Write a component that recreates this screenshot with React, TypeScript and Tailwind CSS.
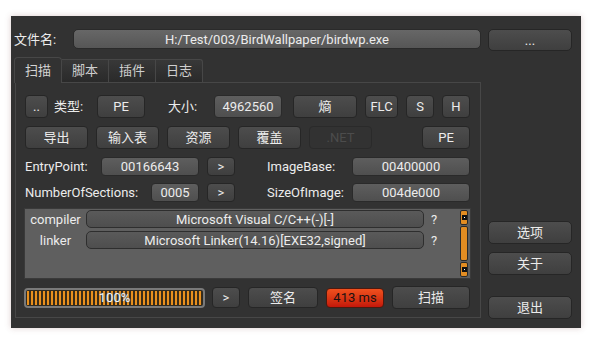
import React from "react";

const FONT = "font-['Roboto','Noto_Sans_CJK_SC',sans-serif]";

function Btn({ className = "", children, disabled = false }: { className?: string; children?: React.ReactNode; disabled?: boolean }) {
  return (
    <div
      className={
        "flex shrink-0 items-center justify-center rounded-[4px] border text-[13px] leading-none " +
        (disabled
          ? "border-[#2a2a2a] bg-[#323232] text-[#4c4c4c] "
          : "border-[#262626] bg-linear-to-b from-[#4d4d4d] to-[#3f3f3f] text-[#ececec] ") +
        className
      }
    >
      {children}
    </div>
  );
}

function Field({ className = "", children }: { className?: string; children?: React.ReactNode }) {
  return (
    <div
      className={
        "flex shrink-0 items-center justify-center rounded-[4px] border border-[#2a2a2a] bg-linear-to-b from-[#5e5e5e] to-[#4f4f4f] text-[13px] leading-none text-[#ececec] " +
        className
      }
    >
      {children}
    </div>
  );
}

function Label({ className = "", children }: { className?: string; children?: React.ReactNode }) {
  return <div className={"shrink-0 text-[13px] leading-none text-[#ececec] " + className}>{children}</div>;
}

function ScrollBtn() {
  return (
    <div className="flex h-[15px] w-[8px] items-center justify-center rounded-[2px] border border-[#2a2a2a] bg-[#e38d22]">
      <div className="flex h-[5px] w-[5px] items-center justify-center bg-[#111]">
        <div className="h-[1px] w-[1px] bg-white" />
      </div>
    </div>
  );
}

export default function App() {
  return (
    <div className={"h-[339px] w-[592px] overflow-hidden bg-white pl-[11px] pt-[16px] " + FONT}>
      <div className="relative h-[312px] w-[570px] bg-[#323232] shadow-[0_0_6px_rgba(120,60,60,0.25)]">
        {/* header row */}
        <div className="flex items-start pt-[13px]">
          <Label className="ml-[3px] mt-[4px] w-[59px]">文件名:</Label>
          <div className="flex h-[20px] w-[408px] items-center justify-center rounded-[5px] border border-[#2a2a2a] bg-linear-to-b from-[#676767] to-[#565656] text-[13px] leading-none text-[#ececec]">
            H:/Test/003/BirdWallpaper/birdwp.exe
          </div>
          <Btn className="ml-[7px] h-[22px] w-[84px] rounded-[5px]">...</Btn>
        </div>

        {/* main */}
        <div className="mt-[6px] flex">
          <div className="ml-[3px] w-[467px]">
            {/* tabs */}
            <div className="relative z-10 flex h-[25px] items-end">
              <div className="-mb-px flex h-[26px] w-[48px] items-center justify-center rounded-t-[4px] border border-b-0 border-[#474747] bg-[#323232] text-[13px] text-[#d4d4d4]">
                扫描
              </div>
              <div className="flex h-[23px] w-[47px] items-center justify-center border border-b-0 border-l-0 border-[#474747] bg-linear-to-b from-[#383838] to-[#2a2a2a] text-[13px] text-[#cfcfcf]">
                脚本
              </div>
              <div className="flex h-[23px] w-[47px] items-center justify-center border border-b-0 border-l-0 border-[#474747] bg-linear-to-b from-[#383838] to-[#2a2a2a] text-[13px] text-[#cfcfcf]">
                插件
              </div>
              <div className="flex h-[23px] w-[47px] items-center justify-center rounded-tr-[3px] border border-b-0 border-l-0 border-[#474747] bg-linear-to-b from-[#383838] to-[#2a2a2a] text-[13px] text-[#cfcfcf]">
                日志
              </div>
            </div>
            {/* panel */}
            <div className="ml-px h-[236px] w-[466px] border border-[#474747] pl-[9px] pt-[12px]">
              {/* row 1 */}
              <div className="flex h-[23px] items-center">
                <Btn className="h-[23px] w-[23px]">..</Btn>
                <Label className="ml-[6px] w-[43px]">类型:</Label>
                <Btn className="h-[23px] w-[48px]">PE</Btn>
                <Label className="ml-[23px] w-[46px]">大小:</Label>
                <Field className="h-[23px] w-[68px]">4962560</Field>
                <Btn className="ml-[11px] h-[23px] w-[64px]">熵</Btn>
                <Btn className="ml-[8px] h-[23px] w-[33px]">FLC</Btn>
                <Btn className="ml-[8px] h-[23px] w-[28px]">S</Btn>
                <Btn className="ml-[8px] h-[23px] w-[28px]">H</Btn>
              </div>
              {/* row 2 */}
              <div className="mt-[8px] flex h-[23px] items-center">
                <Btn className="h-[23px] w-[63px]">导出</Btn>
                <Btn className="ml-[8px] h-[23px] w-[63px]">输入表</Btn>
                <Btn className="ml-[8px] h-[23px] w-[63px]">资源</Btn>
                <Btn className="ml-[8px] h-[23px] w-[63px]">覆盖</Btn>
                <Btn disabled className="ml-[8px] h-[23px] w-[63px]">.NET</Btn>
                <Btn className="ml-[50px] h-[23px] w-[48px]">PE</Btn>
              </div>
              {/* row 3 */}
              <div className="mt-[8px] flex h-[19px] items-center">
                <Label className="w-[76px]">EntryPoint:</Label>
                <Field className="h-[19px] w-[98px]">00166643</Field>
                <Btn className="ml-[8px] h-[19px] w-[28px]">&gt;</Btn>
                <Label className="ml-[32px] w-[85px]">ImageBase:</Label>
                <Field className="h-[19px] w-[118px]">00400000</Field>
              </div>
              {/* row 4 */}
              <div className="mt-[7px] flex h-[19px] items-center">
                <Label className="w-[126px]">NumberOfSections:</Label>
                <Field className="h-[19px] w-[48px]">0005</Field>
                <Btn className="ml-[8px] h-[19px] w-[28px]">&gt;</Btn>
                <Label className="ml-[32px] w-[85px]">SizeOfImage:</Label>
                <Field className="h-[19px] w-[118px]">004de000</Field>
              </div>
              {/* results */}
              <div className="-ml-px mt-[6px] flex h-[71px] w-[447px] border border-[#3a3a3a] bg-[#5f5f5f] pt-px">
                <div className="flex flex-col gap-[3px]">
                  <div className="flex h-[18px] items-center">
                    <div className="w-[61px] text-center text-[13px] leading-none text-[#ececec]">compiler</div>
                    <div className="flex h-[18px] w-[338px] items-center justify-center rounded-[5px] border border-[#2e2e2e] bg-linear-to-b from-[#5a5a5a] to-[#4e4e4e] text-[13px] leading-none text-[#ececec]">
                      Microsoft Visual C/C++(-)[-]
                    </div>
                    <div className="ml-[7px] w-[10px] text-[13px] leading-none text-[#ececec]">?</div>
                  </div>
                  <div className="flex h-[18px] items-center">
                    <div className="w-[61px] text-center text-[13px] leading-none text-[#ececec]">linker</div>
                    <div className="flex h-[18px] w-[338px] items-center justify-center rounded-[5px] border border-[#2e2e2e] bg-linear-to-b from-[#5a5a5a] to-[#4e4e4e] text-[13px] leading-none text-[#ececec]">
                      Microsoft Linker(14.16)[EXE32,signed]
                    </div>
                    <div className="ml-[7px] w-[10px] text-[13px] leading-none text-[#ececec]">?</div>
                  </div>
                </div>
                <div className="ml-[19px] flex h-[67px] flex-col">
                  <ScrollBtn />
                  <div className="my-px h-[35px] w-[8px] rounded-[2px] border border-[#2a2a2a] bg-[#e38d22]" />
                  <ScrollBtn />
                </div>
              </div>
              {/* bottom row */}
              <div className="mt-[7px] flex h-[23px] items-center">
                <div className="relative -ml-px flex h-[20px] w-[181px] items-center justify-center rounded-[4px] border-2 border-[#7a7a7a] bg-[#2e2a20]">
                  <div className="absolute inset-[1px] bg-[repeating-linear-gradient(90deg,#e8901e_0px,#e8901e_2px,#3a2c18_2px,#3a2c18_4px)]" />
                  <span className="relative text-[13px] leading-none text-[#f4f4f4] [text-shadow:0_0_2px_#3a6aa0]">100%</span>
                </div>
                <Btn className="ml-[7px] h-[21px] w-[28px]">&gt;</Btn>
                <Btn className="ml-[8px] h-[21px] w-[70px]">签名</Btn>
                <div className="ml-[8px] flex h-[20px] w-[58px] items-center justify-center rounded-[4px] border border-[#4a1a10] bg-linear-to-b from-[#f0501e] to-[#c4160a] text-[13px] leading-none text-[#1a1010]">
                  413 ms
                </div>
                <Btn className="ml-[8px] h-[23px] w-[78px]">扫描</Btn>
              </div>
            </div>
          </div>

          {/* right column */}
          <div className="ml-[7px] flex w-[84px] flex-col pt-[164px]">
            <Btn className="h-[23px] w-[84px] rounded-[5px]">选项</Btn>
            <Btn className="mt-[8px] h-[23px] w-[84px] rounded-[5px]">关于</Btn>
            <Btn className="mt-[21px] h-[23px] w-[84px] rounded-[5px]">退出</Btn>
          </div>
        </div>
      </div>
    </div>
  );
}
